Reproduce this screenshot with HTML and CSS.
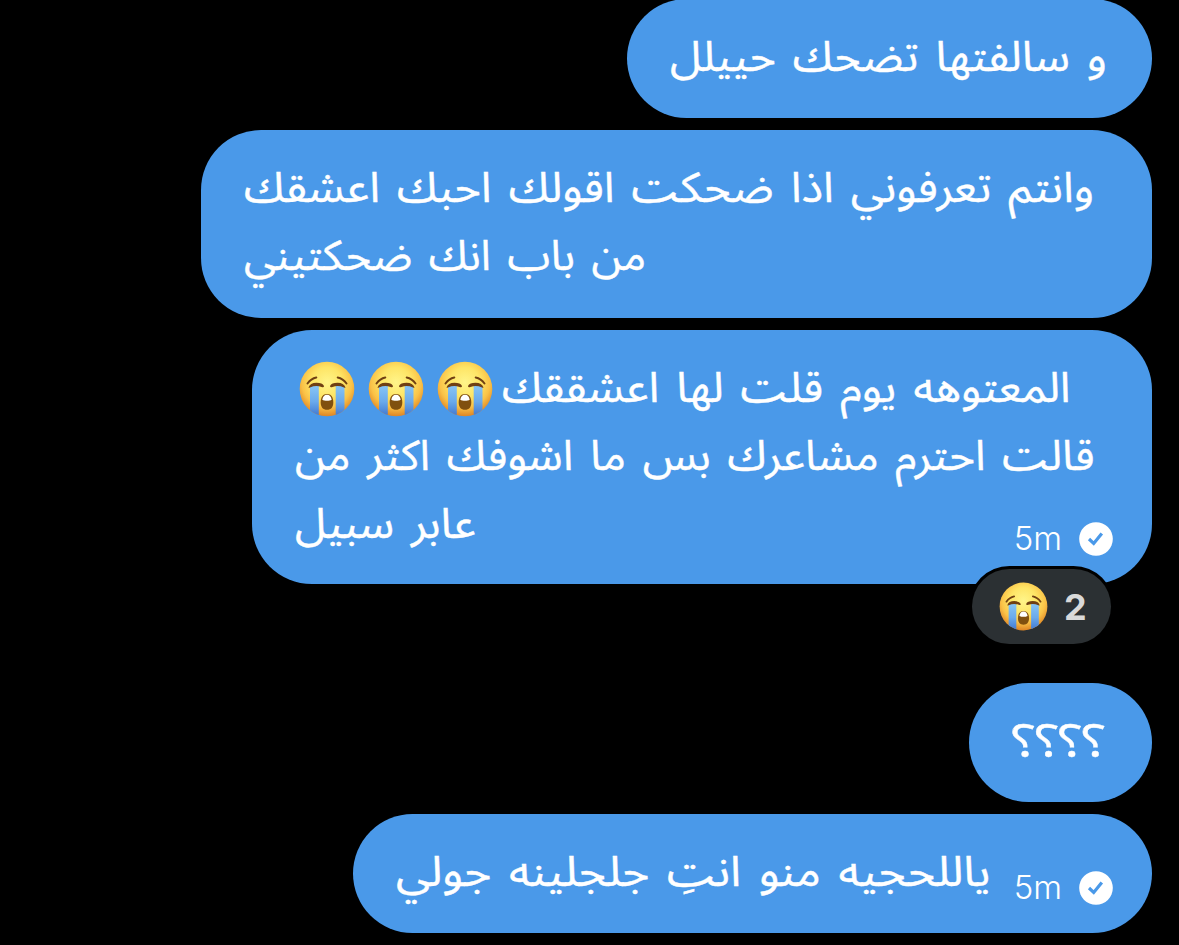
FILE: index.html
```
<!DOCTYPE html>
<html lang="ar">
<head>
  <meta charset="UTF-8">
  <meta name="viewport" content="width=device-width, initial-scale=1.0">
  <title>Messages</title>
  <link rel="stylesheet" href="styles.css">
</head>
<body>

  <svg class="defs" width="0" height="0">
    <defs>
      <radialGradient id="face" cx="50%" cy="38%" r="61%">
        <stop offset="0" stop-color="#fff58a"/>
        <stop offset="0.45" stop-color="#fee566"/>
        <stop offset="0.75" stop-color="#fac247"/>
        <stop offset="1" stop-color="#e08826"/>
      </radialGradient>
      <linearGradient id="tear" x1="0" y1="0" x2="0" y2="1">
        <stop offset="0" stop-color="#86c4f5"/>
        <stop offset="0.5" stop-color="#6aaaec"/>
        <stop offset="1" stop-color="#3c74cf"/>
      </linearGradient>
      <clipPath id="round"><circle cx="28" cy="28" r="27.3"/></clipPath>
      <symbol id="sob" viewBox="0 0 56 56">
        <circle cx="28" cy="28" r="27.3" fill="url(#face)"/>
        <g clip-path="url(#round)">
          <path d="M11 25h8.800v31H11zM36.700 25h8.800v31H36.700z" fill="url(#tear)"/>
        </g>
        <g fill="none" stroke="#704013" stroke-linecap="round">
          <path d="M8.500 22.500Q12 17.600 17.300 16.500M38.700 16.500Q44 17.600 47.500 22.500" stroke-width="2"/>
        </g>
        <path d="M9.500 26.500Q11 21.800 17.500 21.800Q23.500 21.800 25 25Q25 27 22.500 26Q17 23.800 11 26.500Q9.800 27.200 9.500 26.500z" fill="#704013"/>
        <path d="M46.500 26.500Q45 21.800 38.500 21.800Q32.500 21.800 31 25Q31 27 33.500 26Q39 23.800 45 26.500Q46.200 27.200 46.500 26.500z" fill="#704013"/>
        <path d="M28 33c4.200 0 6.300 3.200 6.300 8.500 0 4.700-2.200 7.300-6.300 7.300s-6.300-2.600-6.300-7.300c0-5.300 2.100-8.500 6.300-8.500z" fill="#80500f"/>
        <path d="M23.300 38.800c.6-3.400 2.200-5 4.700-5s4.100 1.600 4.700 5c-2 1.300-7.400 1.300-9.400 0z" fill="#fff"/>
      </symbol>
      <symbol id="sent" viewBox="0 0 34 34">
        <circle cx="17" cy="17" r="16.800" fill="#fff"/>
        <path d="M10 17l4.700 4.400L22.800 11.400" fill="none" stroke="#4a99e9" stroke-width="3.200"/>
      </symbol>
    </defs>
  </svg>

  <div class="chat">
    <div class="bubble bubble-first">
      <p class="line"><span class="text w1">و سالفتها تضحك حييلل</span></p>
    </div>

    <div class="bubble bubble-two">
      <p class="line"><span class="text w2">وانتم تعرفوني اذا ضحكت اقولك احبك اعشقك</span></p>
      <p class="line"><span class="text w3">من باب انك ضحكتيني</span></p>
    </div>

    <div class="bubble bubble-three">
      <p class="line">
        <span class="emojis">
          <svg class="emoji"><use href="#sob"/></svg>
          <svg class="emoji"><use href="#sob"/></svg>
          <svg class="emoji"><use href="#sob"/></svg>
        </span>
        <span class="text w4">المعتوهه يوم قلت لها اعشققك</span>
      </p>
      <p class="line"><span class="text w5">قالت احترم مشاعرك بس ما اشوفك اكثر من</span></p>
      <p class="line"><span class="text w6">عابر سبيل</span></p>
      <div class="meta"><span>5m</span><svg class="check"><use href="#sent"/></svg></div>
      <div class="reaction"><svg class="emoji"><use href="#sob"/></svg><span>2</span></div>
    </div>

    <div class="bubble bubble-four">
      <p class="line"><span class="text w7">؟؟؟؟</span></p>
    </div>

    <div class="bubble bubble-five">
      <p class="line"><span class="text w8">ياللحجيه منو انتِ جلجلينه جولي</span></p>
      <div class="meta"><span>5m</span><svg class="check"><use href="#sent"/></svg></div>
    </div>
  </div>

</body>
</html>
```
FILE: styles.css
```
body {
  margin: 0;
  height: 945px;
  overflow: hidden;
  background-color: #000;
  font-family: "Noto Sans Arabic", "DejaVu Sans", sans-serif;
}

.defs {
  display: block;
}

.chat {
  display: flex;
  flex-direction: column;
  align-items: flex-end;
  gap: 12px;
  padding-right: 27px;
  margin-top: -1px;
}

.bubble {
  position: relative;
  box-sizing: border-box;
  height: 119px;
  padding: 25px 43px;
  border-radius: 60px;
  background-color: #4a99e9;
  color: #fff;
}

.bubble-first {
  width: 525px;
}

.bubble-two {
  width: 951px;
  height: 188px;
}

.bubble-three {
  width: 900px;
  height: 254px;
  margin-bottom: 87px;
}

.bubble-four {
  width: 183px;
}

.bubble-five {
  width: 799px;
}

.line {
  display: flex;
  align-items: center;
  height: 68px;
  margin: 0;
}

.text {
  direction: rtl;
  white-space: nowrap;
  font-size: 42px;
  line-height: 68px;
  word-spacing: 5px;
  -webkit-text-stroke: 0.4px #fff;
  transform-origin: left center;
}

/* stretch each line to its bubble */
.w1 { transform: scaleX(1.066); }
.w2 { transform: scaleX(1.076); }
.w3 { transform: scaleX(1.035); }
.w4 { transform: scaleX(1.068); }
.w5 { transform: scaleX(1.052); }
.w6 { transform: scaleX(1.058); }
.w7 { font-size: 45px; transform: scaleX(1.2); }
.w8 { transform: scaleX(1.104); }

.emojis {
  display: flex;
  gap: 13px;
  margin: 0 9px 0 4px;
}

.emoji {
  width: 56px;
  height: 56px;
}

.meta {
  position: absolute;
  right: 39px;
  bottom: 27px;
  display: flex;
  align-items: center;
  gap: 17px;
  font: 300 33px/34px Inter, sans-serif;
  color: #fff;
}

.meta span {
  padding-bottom: 2px;
}

.check {
  width: 34px;
  height: 34px;
}

.reaction {
  position: absolute;
  right: 41px;
  bottom: -60px;
  display: flex;
  align-items: center;
  gap: 16px;
  box-sizing: border-box;
  width: 139px;
  height: 75px;
  padding-left: 27px;
  border-radius: 38px;
  background-color: #2b3033;
  box-shadow: 0 0 0 3px #000;
  font: bold 36px/36px Inter, sans-serif;
  color: #d9d9d9;
}

.reaction .emoji {
  width: 49px;
  height: 49px;
}
```
